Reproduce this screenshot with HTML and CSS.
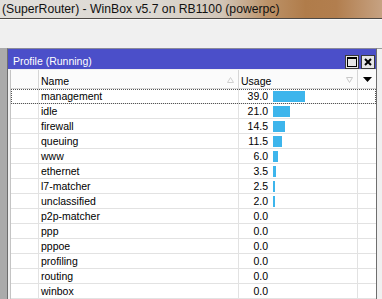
FILE: index.html
```html
<!DOCTYPE html>
<html>
<head>
<meta charset="utf-8">
<link rel="stylesheet" href="styles.css">
</head>
<body>
<div class="titlebar"><span class="apptitle">(SuperRouter) - WinBox v5.7 on RB1100 (powerpc)</span></div>
<div class="toolbar"></div>
<div class="mdi">
  <div class="leftstrip"></div>
  <div class="window">
    <div class="wtitle">
      <span class="wname">Profile (Running)</span>
      <div class="wbtns">
        <div class="wbtn"><svg width="12" height="12" viewBox="0 0 12 12"><rect x="1.5" y="1.5" width="9" height="9" fill="none" stroke="#000" stroke-width="1"/><rect x="1" y="1" width="10" height="2" fill="#000"/></svg></div>
        <div class="wbtn"><svg width="12" height="12" viewBox="0 0 12 12"><path d="M3 3 L9 9 M9 3 L3 9" stroke="#000" stroke-width="2" fill="none"/></svg></div>
      </div>
    </div>
    <div class="wbody">
      <div class="list">
        <div class="hrow">
          <div class="hc"></div>
          <div class="hc"><span>Name</span><svg class="sort" width="7" height="6" viewBox="0 0 7 6"><path d="M3.5 0.5 L6.5 5.5 L0.5 5.5 Z" fill="none" stroke="#d0d0d0"/></svg></div>
          <div class="hc"><span>Usage</span><svg class="sort" width="7" height="6" viewBox="0 0 7 6"><path d="M0.5 0.5 L6.5 0.5 L3.5 5.5 Z" fill="none" stroke="#c8c8c8"/></svg></div>
          <div class="hc dd"><svg width="9" height="5" viewBox="0 0 9 5"><path d="M0 0 L9 0 L4.5 5 Z" fill="#000"/></svg></div>
        </div>
        <div class="row focus"><div class="c"></div><div class="c">management</div><div class="c u"><span class="v">39.0</span><span class="bar" style="width:32px"></span></div><div class="c"></div></div>
        <div class="row"><div class="c"></div><div class="c">idle</div><div class="c u"><span class="v">21.0</span><span class="bar" style="width:17px"></span></div><div class="c"></div></div>
        <div class="row"><div class="c"></div><div class="c">firewall</div><div class="c u"><span class="v">14.5</span><span class="bar" style="width:12px"></span></div><div class="c"></div></div>
        <div class="row"><div class="c"></div><div class="c">queuing</div><div class="c u"><span class="v">11.5</span><span class="bar" style="width:9px"></span></div><div class="c"></div></div>
        <div class="row"><div class="c"></div><div class="c">www</div><div class="c u"><span class="v">6.0</span><span class="bar" style="width:5px"></span></div><div class="c"></div></div>
        <div class="row"><div class="c"></div><div class="c">ethernet</div><div class="c u"><span class="v">3.5</span><span class="bar" style="width:3px"></span></div><div class="c"></div></div>
        <div class="row"><div class="c"></div><div class="c">l7-matcher</div><div class="c u"><span class="v">2.5</span><span class="bar" style="width:2px"></span></div><div class="c"></div></div>
        <div class="row"><div class="c"></div><div class="c">unclassified</div><div class="c u"><span class="v">2.0</span><span class="bar" style="width:2px"></span></div><div class="c"></div></div>
        <div class="row"><div class="c"></div><div class="c">p2p-matcher</div><div class="c u"><span class="v">0.0</span></div><div class="c"></div></div>
        <div class="row"><div class="c"></div><div class="c">ppp</div><div class="c u"><span class="v">0.0</span></div><div class="c"></div></div>
        <div class="row"><div class="c"></div><div class="c">pppoe</div><div class="c u"><span class="v">0.0</span></div><div class="c"></div></div>
        <div class="row"><div class="c"></div><div class="c">profiling</div><div class="c u"><span class="v">0.0</span></div><div class="c"></div></div>
        <div class="row"><div class="c"></div><div class="c">routing</div><div class="c u"><span class="v">0.0</span></div><div class="c"></div></div>
        <div class="row"><div class="c"></div><div class="c">winbox</div><div class="c u"><span class="v">0.0</span></div><div class="c"></div></div>
      </div>
    </div>
  </div>
  <div class="rightstrip"></div>
</div>
</body>
</html>
```

FILE: styles.css
```css
html, body {
  margin: 0;
  padding: 0;
}
body {
  width: 382px;
  height: 299px;
  overflow: hidden;
  background: #f0f0f0;
  font-family: "Liberation Sans", Arial, sans-serif;
}
.titlebar {
  height: 18px;
  border-bottom: 1px solid #4e4a46;
  background: linear-gradient(90deg, #e2dfda 0%, #dcd8d2 40%, #d2c6b8 58%, #bc9268 70%, #b07c4a 80%, #b27e4e 88%, #c6a282 100%);
  display: flex;
  align-items: center;
  padding-left: 2px;
}
.apptitle {
  font-size: 12.2px;
  color: #111;
  white-space: nowrap;
}
.toolbar {
  height: 29px;
  background: #f0f0f0;
  border-top: 1px solid #fafafa;
  box-sizing: border-box;
}
.mdi {
  display: flex;
  height: 251px;
}
.leftstrip {
  width: 7px;
  background: #ababab;
}
.rightstrip {
  flex: 1;
  background: #f0f0f0;
  border-top: 1px solid #9a9a9a;
}
.window {
  width: 368px;
  border: 1px solid #6e6e6e;
  border-top-color: #8a8a9a;
  border-bottom: none;
  background: #f0f0f0;
  display: flex;
  flex-direction: column;
}
.wtitle {
  height: 20px;
  background: #4b4fc9;
  display: flex;
  align-items: center;
  justify-content: space-between;
}
.wname {
  color: #fff;
  font-size: 10.5px;
  padding-left: 5px;
  padding-top: 4px;
}
.wbtns {
  display: flex;
  gap: 2px;
  padding-right: 1px;
  padding-top: 5px;
}
.wbtn {
  width: 12px;
  height: 12px;
  border: 1px solid #3a3a3a;
  background: #e6e6e6;
  display: flex;
}
.wbody {
  padding: 1px 0 0 2px;
  flex: 1;
}
.list {
  border-left: 1px solid #c4c4c4;
  background: #fff;
  height: 100%;
  font-size: 10.5px;
  color: #000;
}
.hrow, .row {
  display: grid;
  grid-template-columns: 28px 200px 119px 18px;
}
.hrow {
  height: 18px;
  border-bottom: 1px solid #d6d6d6;
  background: #fbfbfb;
}
.hc {
  border-right: 1px solid #d6d6d6;
  display: flex;
  align-items: center;
  justify-content: space-between;
  padding: 3px 4px 0 2px;
}
.hc:first-child { padding: 0; }
.hc.dd {
  border-right: none;
  justify-content: center;
  padding: 1px 0 0 0;
}
.sort { margin-top: -2px; }
.row {
  height: 14px;
  border-bottom: 1px solid #e2e2e2;
}
.row.focus {
  outline: 1px dotted #555;
  outline-offset: -1px;
}
.c {
  border-right: 1px solid #e2e2e2;
  padding-left: 2px;
  line-height: 15px;
  white-space: nowrap;
}
.c:first-child, .c:last-child { padding: 0; }
.c:last-child { border-right: none; }
.c.u {
  display: flex;
  align-items: center;
  padding-left: 0;
}
.v {
  width: 29px;
  text-align: right;
  margin-right: 5px;
}
.bar {
  height: 11px;
  background: #3db5ec;
}
```
